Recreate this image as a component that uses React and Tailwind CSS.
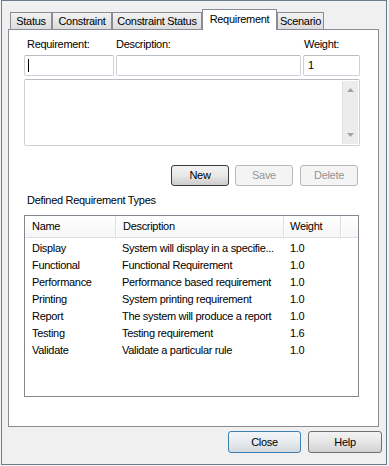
import React from 'react';

const font = "font-['Liberation_Sans',Arial,sans-serif]";

const tabs = [
  { label: 'Status', w: 'w-[42px]' },
  { label: 'Constraint', w: 'w-[60px]' },
  { label: 'Constraint Status', w: 'w-[90px]' },
  { label: 'Requirement', w: 'w-[75px]', active: true },
  { label: 'Scenario', w: 'w-[47px]' },
];

const rows = [
  ['Display', 'System will display in a specifie...', '1.0'],
  ['Functional', 'Functional Requirement', '1.0'],
  ['Performance', 'Performance based requirement', '1.0'],
  ['Printing', 'System printing requirement', '1.0'],
  ['Report', 'The system will produce a report', '1.0'],
  ['Testing', 'Testing requirement', '1.6'],
  ['Validate', 'Validate a particular rule', '1.0'],
];

// plain Win7 style push button
const Button = ({ children, w, disabled, focus, def }) => {
  let look =
    'border-[#707070] bg-linear-to-b from-[#f3f3f3] via-[#e6e6e6] to-[#d2d2d2] text-black';
  if (disabled) look = 'border-[#b4b8bb] bg-[#f4f4f4] text-[#959595]';
  if (focus)
    look = 'border-[#3c7fb1] bg-linear-to-b from-[#f3f6f9] via-[#e6ebef] to-[#d3d9de] text-black';
  if (def) look = 'border-[#3c3c3c] bg-linear-to-b from-[#f3f3f3] via-[#e8e8e8] to-[#cdcdcd] text-black';
  return (
    <div
      className={`${w} h-full flex items-center justify-center rounded-[3px] border ${look} text-[11px]`}
    >
      {children}
    </div>
  );
};

export default function App() {
  return (
    <div className={`w-[389px] h-[466px] bg-[#f4f4f4] ${font} text-[11px] leading-[13px] tracking-[-0.3px] text-black`}>
      <div className="ml-[1px] w-[386px] h-[465px] border border-[#6f7b8c] bg-[#f0f0f0] flex flex-col pt-[8px] pl-[6px]">
        {/* Tabs */}
        <div className="flex items-end ml-[2px] h-[20px]">
          {tabs.map((t) =>
            t.active ? (
              <div
                key={t.label}
                className={`${t.w} relative z-10 -mb-px h-[21px] border border-b-0 border-[#898c95] bg-white flex justify-center pt-[3px]`}
              >
                {t.label}
              </div>
            ) : (
              <div
                key={t.label}
                className={`${t.w} h-[17px] border border-b-0 border-[#898c95] bg-linear-to-b from-[#f2f2f2] to-[#dcdcdc] flex items-center justify-center pt-[1px]`}
              >
                {t.label}
              </div>
            )
          )}
        </div>

        {/* Panel */}
        <div className="w-[371px] h-[398px] border border-[#898c95] bg-white pt-[8px] pl-[15px] flex flex-col">
          <div className="flex h-[13px]">
            <div className="w-[92px] pl-[3px]">Requirement:</div>
            <div className="w-[187px]">Description:</div>
            <div className="pl-[1px]">Weight:</div>
          </div>

          <div className="flex gap-[2px] mt-[4px] h-[21px]">
            <div className="w-[90px] border border-[#cdd0d5] border-t-[#b9bcc2] rounded-[2px] flex items-center pl-[3px]">
              <div className="w-px h-[13px] bg-black" />
            </div>
            <div className="w-[185px] border border-[#cdd0d5] border-t-[#b9bcc2] rounded-[2px]" />
            <div className="w-[57px] border border-[#cdd0d5] border-t-[#b9bcc2] rounded-[2px] flex items-center pl-[4px]">
              1
            </div>
          </div>

          <div className="mt-[3px] w-[336px] h-[67px] border border-[#cdd0d5] border-t-[#b9bcc2] rounded-[2px] flex justify-end p-px">
            <div className="w-[16px] h-full bg-[#ececec] border-l border-[#e2e2e2] flex flex-col items-center justify-between py-[7px]">
              <svg width="7" height="4" viewBox="0 0 7 4">
                <path d="M0 4 L3.5 0 L7 4 Z" fill="#a3a3a3" />
              </svg>
              <svg width="7" height="4" viewBox="0 0 7 4">
                <path d="M0 0 L3.5 4 L7 0 Z" fill="#a3a3a3" />
              </svg>
            </div>
          </div>

          <div className="mt-[19px] h-[21px] w-[334px] flex justify-end">
            <Button w="w-[58px]" def>New</Button>
            <div className="w-[6px]" />
            <Button w="w-[58px]" disabled>Save</Button>
            <div className="w-[7px]" />
            <Button w="w-[58px]" disabled>Delete</Button>
          </div>

          <div className="mt-[8px] pl-[3px] h-[13px]">Defined Requirement Types</div>

          {/* List */}
          <div className="mt-[8px] w-[335px] h-[182px] border border-[#828790] flex flex-col">
            <div className="flex h-[22px] border-b border-[#e0e0e0] bg-linear-to-b from-white to-[#f5f6f7]">
              <div className="w-[91px] pl-[7px] flex items-center border-r border-[#dedede]">Name</div>
              <div className="w-[168px] pl-[6px] flex items-center border-x border-l-white border-r-[#dedede]">
                Description
              </div>
              <div className="w-[57px] pl-[5px] flex items-center border-x border-l-white border-r-[#dedede]">
                Weight
              </div>
              <div className="flex-1 border-l border-white" />
            </div>
            <div className="pt-[2px]">
              {rows.map(([n, d, w]) => (
                <div key={n} className="flex h-[17px] items-center">
                  <div className="w-[91px] pl-[7px]">{n}</div>
                  <div className="w-[168px] pl-[6px] whitespace-nowrap overflow-hidden">{d}</div>
                  <div className="w-[57px] pl-[6px]">{w}</div>
                </div>
              ))}
            </div>
          </div>
        </div>

        {/* Dialog buttons */}
        <div className="mt-[4px] h-[22px] flex justify-end pr-[4px]">
          <Button w="w-[73px]" focus>Close</Button>
          <div className="w-[7px]" />
          <Button w="w-[74px]">Help</Button>
        </div>
      </div>
    </div>
  );
}
